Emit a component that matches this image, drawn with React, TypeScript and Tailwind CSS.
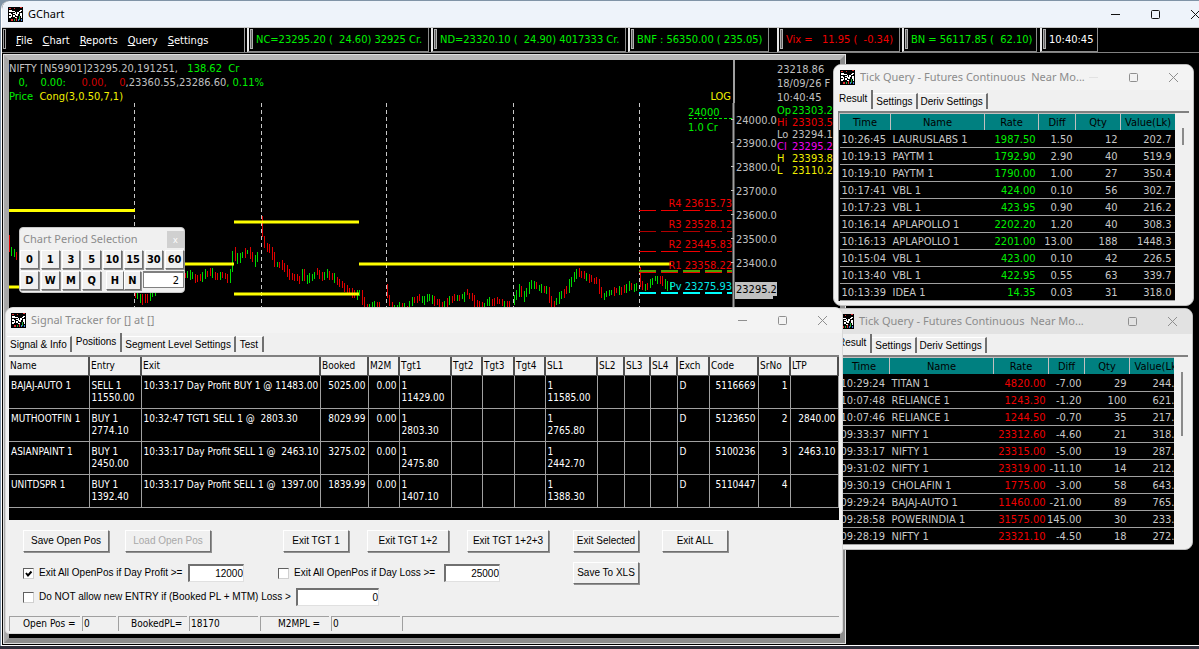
import type { ReactNode } from "react";

const TAHOMA = "font-['DejaVu_Sans_Condensed','DejaVu_Sans',sans-serif]";
const DIALOG = "font-['Liberation_Sans',sans-serif]";
const CAPTION = "font-['Noto_Sans',sans-serif]";

function AppIcon() {
  return (
    <svg className="h-[15px] w-[15px] shrink-0" viewBox="0 0 15 15" shapeRendering="crispEdges" aria-hidden="true">
      <rect width="15" height="15" fill="#000" />
      <path d="M1 1h2v1H1zM6 1h1v1H6zM12 0h2v1h-2z" fill="#e03030" />
      <path d="M1 3h3v2H1zM1 6h2v2H1zM3 7h1v3H3zM1 9h2v2H1zM4 4h3v1H4zM5 6h2v1H5zM5 8h2v2H5zM7 5h1v3H7zM8 7h2v2H8zM9 5h2v2H9zM11 4h2v1h-2zM12 3h2v1h-2zM12 6h2v3h-2zM13 9h1v2h-1zM7 10h2v1H7z" fill="#fff" />
      <path d="M3 12h2v2H3zM8 11h1v3H8z" fill="#e03030" />
      <path d="M6 12h1v2H6zM11 9h1v4h-1z" fill="#20b040" />
      <path d="M10 12h1v2h-1zM13 12h1v2h-1z" fill="#4080e0" />
    </svg>
  );
}

function CaptionButtons({ faintMinimize = false, dark = false }: { faintMinimize?: boolean; dark?: boolean }) {
  const stroke = dark ? "#111" : "#8f8f8f";
  return (
    <div className="flex shrink-0">
      <button aria-label="Minimize" className="flex h-6 w-10 items-center justify-center">
        <svg width="11" height="11" viewBox="0 0 11 11"><path d="M1 5.5h9" stroke={faintMinimize ? "#e2e2e2" : stroke} /></svg>
      </button>
      <button aria-label="Maximize" className="flex h-6 w-10 items-center justify-center">
        <svg width="11" height="11" viewBox="0 0 11 11"><rect x="1.5" y="1.5" width="8" height="8" rx="1" fill="none" stroke={stroke} /></svg>
      </button>
      <button aria-label="Close" className="flex h-6 w-10 items-center justify-center">
        <svg width="11" height="11" viewBox="0 0 11 11"><path d="M1 1l9 9M10 1l-9 9" stroke={stroke} /></svg>
      </button>
    </div>
  );
}

function Band({ width, color, children }: { width: string; color: string; children: ReactNode }) {
  return (
    <div className={`flex h-[24px] shrink-0 overflow-hidden border border-l-2 border-t-0 border-[#8c8c8c] border-l-[#e8e8e8] leading-[24px] whitespace-pre ${width} ${color}`}>
      <span className="mt-px mr-[3px] ml-px h-[20px] w-[3px] shrink-0 border border-[#b0b0b0] bg-[#606060]" />
      {children}
    </div>
  );
}

const MENU = ["File", "Chart", "Reports", "Query", "Settings"];

function Toolbar() {
  return (
    <div className="flex h-[26px] items-start overflow-hidden border-t border-b border-t-[#c8c8c8] border-b-[#808080] bg-black text-[11px]">
      <nav className="flex h-[24px] w-[243px] shrink-0 gap-[10px] border-r border-[#a0a0a0] leading-[25px] text-white">
        <span className="mt-px ml-px h-[20px] w-[3px] shrink-0 border border-[#a0a0a0]" />
        {MENU.map((m) => (
          <a key={m} href={`#${m}`}>
            <u>{m[0]}</u>
            {m.slice(1)}
          </a>
        ))}
      </nav>
      <div className="ml-[2px] flex gap-[2px] text-[#00f000]">
        <Band width="w-[182px]" color="">{"NC=23295.20 (  24.60) 32925 Cr."}</Band>
        <Band width="w-[195px]" color="">{"ND=23320.10 (  24.90) 4017333 Cr."}</Band>
        <Band width="w-[141px]" color="">{"BNF : 56350.00 ( 235.05)"}</Band>
      </div>
      <div className="ml-[8px] flex gap-[2px]">
        <Band width="w-[123px]" color="text-[#f00000]">{"Vix =   11.95 (  -0.34)"}</Band>
        <Band width="w-[135px]" color="text-[#00f000]">{"BN = 56117.85 (  62.10)"}</Band>
      </div>
      <div className="ml-[3px]">
        <Band width="w-[58px]" color="text-white">10:40:45</Band>
      </div>
    </div>
  );
}

/* Price path as x/y anchors, one list for each uninterrupted run of bars. */
const RUNS: number[][][] = [
  [[9, 243], [11, 252], [15, 253], [19, 258]],
  [[135, 294], [138, 296], [143, 300], [148, 298], [152, 293], [158, 288], [170, 280], [186, 274], [193, 276], [198, 279], [205, 275], [210, 272], [215, 276], [221, 275], [226, 277], [229, 280], [231, 272], [234, 252], [237, 260], [240, 257], [246, 253], [250, 253], [255, 262], [259, 256]],
  [[262, 227], [264, 240], [266, 246], [268, 249], [270, 248], [273, 256], [276, 264], [280, 265], [285, 268], [290, 275], [295, 277], [300, 280], [303, 273], [307, 279], [312, 277], [317, 272], [322, 277], [328, 274], [335, 279], [340, 283], [345, 288], [350, 292], [355, 295], [360, 292], [363, 300], [367, 308], [374, 305], [381, 309]],
  [[387, 292], [389, 300], [393, 309], [400, 306], [408, 308], [413, 300], [420, 298], [425, 300], [430, 297], [437, 302], [443, 305], [450, 300], [457, 298], [463, 297], [467, 293], [473, 298], [477, 304], [483, 306], [490, 302], [497, 301], [503, 304], [511, 305]],
  [[514, 301], [518, 293], [520, 289], [524, 297], [530, 287], [533, 283], [540, 288], [547, 290], [550, 299], [553, 305], [560, 297], [567, 291], [572, 280], [578, 273], [583, 275], [590, 278], [597, 281], [600, 290], [603, 297], [608, 294], [615, 291], [622, 290], [630, 286], [638, 289]],
  [[640, 277], [642, 286], [646, 287], [650, 283], [655, 279], [662, 281], [667, 285], [671, 287]],
];

function makeBars() {
  let seed = 17;
  const rnd = () => {
    seed = (seed * 1103515245 + 12345) % 2147483648;
    return seed / 2147483648;
  };
  let up = "";
  let down = "";
  for (const run of RUNS) {
    let i = 0;
    const end = run[run.length - 1][0];
    for (let x = run[0][0]; x < end; x += 2.5) {
      while (run[i + 1][0] <= x) i++;
      const [x0, y0] = run[i];
      const [x1, y1] = run[i + 1];
      const slope = (y1 - y0) / (x1 - x0);
      const mid = y0 + slope * (x - x0) + (rnd() - 0.5) * 2;
      const half = 2 + rnd() * 2.5 + Math.min(Math.abs(slope) * 1.2, 8);
      const bar = `M${Math.floor(x) + 0.5} ${Math.round(mid - half)}v${Math.round(half * 2)}`;
      if (rnd() + slope * 0.35 > 0.5) down += bar;
      else up += bar;
    }
  }
  return { up, down };
}

const BARS = makeBars();
const SESSIONS = [134, 261, 386, 513, 639];
const AXIS: [string, number][] = [["24000.0", 120], ["23900.0", 143], ["23800.0", 167], ["23700.0", 191], ["23600.0", 215], ["23500.0", 239], ["23400.0", 263]];
const PIVOTS: [string, number, string][] = [["R4 23615.73", 210, "#f00000"], ["R3 23528.12", 231, "#b00000"], ["R2 23445.83", 251, "#f00000"], ["R1 23358.22", 272, "#f00000"]];
const QUOTE: [string, string, string][] = [["Op", "23303.2", "text-[#00f000]"], ["Hi", "23303.5", "text-[#f00000]"], ["Lo", "23294.1", "text-[#c0c0c0]"], ["Cl", "23295.2", "text-[#f000f0]"], ["H", "23393.8", "text-[#f0f000]"], ["L", "23110.2", "text-[#f0f000]"]];

function Chart() {
  return (
    <svg className="block h-[204px] w-[768px]" viewBox="9 103 768 204" fontSize="11">
      <g stroke="#c8c8c8" strokeDasharray="4 3">
        {SESSIONS.map((x) => <path key={x} d={`M${x + 0.5} 103V307`} />)}
      </g>
      <g fill="none" shapeRendering="crispEdges">
        <path d={BARS.up} stroke="#00d800" />
        <path d={BARS.down} stroke="#e00000" />
      </g>
      <path d="M9 210.5H135M9 287H20M180 264H234M234 222H359M234 294H359M359 264H671" stroke="#ffff00" strokeWidth="3" />
      <g shapeRendering="crispEdges">
        {PIVOTS.map(([label, y, color]) => <path key={label} d={`M639 ${y + 0.5}H732`} stroke={color} strokeDasharray="17 5" />)}
        <path d="M639 271H732" stroke="#50a000" strokeWidth="2" strokeDasharray="17 5" />
        <path d="M639 293H732" stroke="#00ffff" strokeWidth="2" strokeDasharray="17 5" />
      </g>
      {PIVOTS.map(([label, y]) => <text key={label} x="732" y={y - 3} fill="#f00000" textAnchor="end">{label}</text>)}
      <text x="732" y="290" fill="#00e8e8" textAnchor="end">Pv 23275.93</text>
      <g fill="#00f000">
        <text x="688" y="116">24000</text>
        <text x="688" y="131">1.0 Cr</text>
      </g>
      <path d="M689 118.5H733" stroke="#00f000" strokeDasharray="3 2" />
      <path d="M733.5 103V307" stroke="#a0a0a0" strokeWidth="2" />
      {AXIS.map(([label, y]) => (
        <g key={label}>
          <path d={`M731 ${y - 0.5}h3`} stroke="#c0c0c0" />
          <text x="736" y={y + 4} fill="#c0c0c0">{label}</text>
        </g>
      ))}
      <path d="M735 282h42v14h-4v3h-38z" fill="#c0c0c0" />
      <text x="736" y="293" fill="#000">23295.2</text>
    </svg>
  );
}

function ChartWindow() {
  return (
    <section className="absolute top-[2px] left-[2px] h-[588px] w-[841px] border-[5px] border-[#a8a8a8] border-t-[#b8b8b8] border-r-[#8c8c8c] border-b-[#8c8c8c] bg-black text-[11px] leading-[14px] outline outline-[#e0e0e0]">
      <div className="flex">
        <div className="w-[768px] shrink-0">
          <div className="h-[43px] w-[726px] border-r-2 border-[#a0a0a0] pt-[2px] whitespace-pre text-[#c0c0c0]">
            <div>NIFTY [N59901]23295.20,191251,{"   "}<span className="text-[#00f000]">138.62{"  "}Cr</span></div>
            <div>
              <span className="text-[#00f000]">{"   0,    0.00:    "}</span>
              <span className="text-[#d00000]">{" 0.00,    0"}</span>
              ,23360.55,23286.60
              <span className="text-[#00f000]">, 0.11%</span>
            </div>
            <div className="flex h-[12px] justify-between text-[#f0f000]">
              <span><span className="text-[#00f000]">Price</span>{"  "}Cong(3,0.50,7,1)</span>
              <span className="pr-[2px]">LOG</span>
            </div>
          </div>
          <Chart />
        </div>
        <div className="min-w-0 flex-1 overflow-hidden pt-[3px] whitespace-pre text-[#c0c0c0]">
          <div>23218.86</div>
          <div>18/09/26 F</div>
          <div>10:40:45</div>
          {QUOTE.map(([k, v, c]) => (
            <div key={k} className={`flex leading-[12px] ${c}`}><span className="w-[15px] shrink-0">{k}</span>{v}</div>
          ))}
        </div>
      </div>
    </section>
  );
}

function Tabs({ items, active }: { items: string[]; active: number }) {
  return (
    <div role="tablist" className={`flex h-[19px] items-end pl-px text-[10px] leading-[12px] text-black ${DIALOG}`}>
      {items.map((t, i) => (
        <button key={t} role="tab" aria-selected={i === active} className={i === active ? "h-[19px] border-r-2 border-[#707070] px-[4px] pb-px whitespace-nowrap" : "h-[16px] min-w-[28px] border-t border-r-2 border-t-white border-r-[#707070] px-[3px] whitespace-nowrap"}>
          {t}
        </button>
      ))}
    </div>
  );
}

interface TickProps {
  place: string;
  table: string;
  cols: string[];
  rows: string[];
  rateColor: string;
  valuePad: string;
  thumb: string;
  bar: string;
}

function TickWindow({ place, table, cols, rows, rateColor, valuePad, thumb, bar }: TickProps) {
  return (
    <section className={`absolute overflow-hidden rounded-lg border border-[#bdbdbd] bg-[#f0f0f0] ${place}`}>
      <header className={`flex h-[25px] items-center pl-[6px] text-[11px] text-[#8c8c8c] ${bar} ${CAPTION}`}>
        <AppIcon />
        <h2 className="ml-[5px] min-w-0 flex-1 whitespace-pre">{"Tick Query - Futures Continuous  Near Mo..."}</h2>
        <CaptionButtons faintMinimize />
      </header>
      <Tabs items={["Result", "Settings", "Deriv Settings"]} active={0} />
      <div className="mx-[4px] mt-[2px] mb-[4px] flex border-t-2 border-l border-[#808080]">
        <div className="w-[336px] shrink-0 overflow-hidden bg-black">
          <table className={`table-fixed border-collapse text-[11px] leading-[15px] text-[#c8c8c8] ${table}`}>
            <colgroup>{cols.map((c, i) => <col key={i} className={c} />)}</colgroup>
            <thead>
              <tr className="h-[17px] bg-[#008080] text-black">
                {["Time", "Name", "Rate", "Diff", "Qty", "Value(Lk)"].map((h) => (
                  <th key={h} className="border border-[#c0c0c0] border-b-black p-0 text-center font-normal">{h}</th>
                ))}
              </tr>
            </thead>
            <tbody>
              {rows.map((r) => {
                const c = r.split("|");
                return (
                  <tr key={r} className="h-[17px] border-b border-[#a0a0a0] whitespace-nowrap">
                    <td className="p-0 pl-[2px]">{c[0]}</td>
                    <td className="p-0 pl-[2px]">{c[1]}</td>
                    <td className={`p-0 pr-[3px] text-right ${rateColor}`}>{c[2]}</td>
                    <td className="p-0 pr-[3px] text-right"><span className="float-right">{c[3]}</span></td>
                    <td className="p-0 pr-[3px] text-right">{c[4]}</td>
                    <td className={`p-0 text-right ${valuePad}`}>{c[5]}</td>
                  </tr>
                );
              })}
            </tbody>
          </table>
        </div>
        <div className="flex-1 pl-[7px]">
          <div className={`w-[2px] bg-[#8a8a8a] ${thumb}`} />
        </div>
      </div>
    </section>
  );
}

const BUYS = [
  "10:26:45|LAURUSLABS 1|1987.50|1.50|12|202.7",
  "10:19:13|PAYTM 1|1792.90|2.90|40|519.9",
  "10:19:10|PAYTM 1|1790.00|1.00|27|350.4",
  "10:17:41|VBL 1|424.00|0.10|56|302.7",
  "10:17:23|VBL 1|423.95|0.90|40|216.2",
  "10:16:14|APLAPOLLO 1|2202.20|1.20|40|308.3",
  "10:16:13|APLAPOLLO 1|2201.00|13.00|188|1448.3",
  "10:15:04|VBL 1|423.00|0.10|42|226.5",
  "10:13:40|VBL 1|422.95|0.55|63|339.7",
  "10:13:39|IDEA 1|14.35|0.03|31|318.0",
];

const SELLS = [
  "10:29:24|TITAN 1|4820.00|-7.00|29|244.",
  "10:07:48|RELIANCE 1|1243.30|-1.20|100|621.",
  "10:07:46|RELIANCE 1|1244.50|-0.70|35|217.",
  "09:33:37|NIFTY 1|23312.60|-4.60|21|318.",
  "09:33:17|NIFTY 1|23315.00|-5.00|19|287.",
  "09:31:02|NIFTY 1|23319.00|-11.10|14|212.",
  "09:30:19|CHOLAFIN 1|1775.00|-3.00|58|643.",
  "09:29:24|BAJAJ-AUTO 1|11460.00|-21.00|89|765.",
  "09:28:58|POWERINDIA 1|31575.00|145.00|30|233.",
  "09:28:19|NIFTY 1|23321.10|-4.50|18|272.",
];

const RAISED = "border border-t-white border-l-white border-r-[#707070] border-b-[#707070] shadow-[1px_1px_0_#909090]";

function PeriodKey({ label, width = "w-[19px]" }: { label: string; width?: string }) {
  return <button className={`h-[19px] bg-[#f0f0f0] text-center text-[11px] leading-[16px] font-bold ${RAISED} ${width}`}>{label}</button>;
}

function PeriodPalette() {
  return (
    <section className="absolute top-[174px] left-[17px] w-[166px] rounded border border-[#c8c8c8] bg-[#f0f0f0] text-black">
      <header className={`flex h-[22px] items-center justify-between pl-[3px] text-[11px] text-[#8c8c8c] ${CAPTION}`}>
        <h2>Chart Period Selection</h2>
        <button aria-label="Close palette" className="h-[17px] w-[17px] bg-[#d0d0d0] text-[9px] leading-[15px] text-white">x</button>
      </header>
      <div className="flex gap-[2px] pb-[2px]">
        {["0", "1", "3", "5", "10", "15", "30", "60"].map((k) => <PeriodKey key={k} label={k} />)}
      </div>
      <div className="flex gap-[2px] pb-[2px]">
        {["D", "W", "M", "Q"].map((k) => <PeriodKey key={k} label={k} />)}
        <div className="ml-[3px] flex">
          <PeriodKey label="H" width="w-[18px]" />
          <PeriodKey label="N" width="w-[17px]" />
        </div>
        <input aria-label="Period" defaultValue="2" className="h-[17px] w-[41px] border border-t-2 border-[#808080] bg-white pr-[4px] text-right text-[11px] leading-[14px]" />
      </div>
    </section>
  );
}

const POSITION_COLS: [string, string][] = [
  ["Name", "w-[80px]"], ["Entry", "w-[52px]"], ["Exit", "w-[179px]"], ["Booked", "w-[48px]"], ["M2M", "w-[31px]"], ["Tgt1", "w-[52px]"],
  ["Tgt2", "w-[31px]"], ["Tgt3", "w-[32px]"], ["Tgt4", "w-[31px]"], ["SL1", "w-[52px]"], ["SL2", "w-[27px]"], ["SL3", "w-[26px]"],
  ["SL4", "w-[27px]"], ["Exch", "w-[32px]"], ["Code", "w-[49px]"], ["SrNo", "w-[32px]"], ["LTP", "w-[48px]"],
];
const RIGHT = new Set(["Booked", "M2M", "Code", "SrNo", "LTP"]);

const POSITIONS = [
  ["BAJAJ-AUTO 1", "SELL 1\n11550.00", "10:33:17 Day Profit BUY 1 @ 11483.00", "5025.00", "0.00", "1\n11429.00", "", "", "", "1\n11585.00", "", "", "", "D", "5116669", "1", ""],
  ["MUTHOOTFIN 1", "BUY 1\n2774.10", "10:32:47 TGT1 SELL 1 @  2803.30", "8029.99", "0.00", "1\n2803.30", "", "", "", "1\n2765.80", "", "", "", "D", "5123650", "2", "2840.00"],
  ["ASIANPAINT 1", "BUY 1\n2450.00", "10:33:17 Day Profit SELL 1 @  2463.10", "3275.02", "0.00", "1\n2475.80", "", "", "", "1\n2442.70", "", "", "", "D", "5100236", "3", "2463.10"],
  ["UNITDSPR 1", "BUY 1\n1392.40", "10:33:17 Day Profit SELL 1 @  1397.00", "1839.99", "0.00", "1\n1407.10", "", "", "", "1\n1388.30", "", "", "", "D", "5110447", "4", ""],
];

function PushButton({ label, place, disabled = false }: { label: string; place: string; disabled?: boolean }) {
  return (
    <button disabled={disabled} className={`h-[22px] shrink-0 bg-[#f0f0f0] text-center whitespace-nowrap disabled:text-[#a8a8a8] ${RAISED} ${place}`}>{label}</button>
  );
}

const FIELD = "h-[18px] shrink-0 border border-t-2 border-l-2 border-t-[#707070] border-l-[#707070] border-r-[#e0e0e0] border-b-[#e0e0e0] bg-white pb-px text-right text-[10px]";
const CHECK = "h-[11px] w-[11px] shrink-0 appearance-none border border-t-[#606060] border-l-[#606060] border-r-[#d0d0d0] border-b-[#d0d0d0] bg-white";

function StatusCell({ children, place }: { children?: ReactNode; place: string }) {
  return <div className={`h-[15px] shrink-0 border-t border-l border-[#a0a0a0] whitespace-pre ${place}`}>{children}</div>;
}

function SignalTracker() {
  return (
    <section className="absolute top-[254px] left-[3px] w-[838px] overflow-hidden rounded-t-lg rounded-b border border-[#d8d8d8] bg-[#f0f0f0] text-black">
      <header className={`flex h-[25px] items-center bg-[#f3f3f3] pl-[5px] text-[11px] text-[#8c8c8c] ${CAPTION}`}>
        <AppIcon />
        <h2 className="ml-[5px] flex-1">Signal Tracker for [] at []</h2>
        <CaptionButtons />
      </header>
      <Tabs items={["Signal & Info", "Positions", "Segment Level Settings", "Test"]} active={1} />
      <div className="mx-[3px] mt-[3px] h-[165px] border-t-2 border-[#808080] bg-black">
        <table className="w-full table-fixed border-collapse text-[10px] leading-[12px] text-white">
          <colgroup>{POSITION_COLS.map(([n, w]) => <col key={n} className={w} />)}</colgroup>
          <thead>
            <tr className="h-[18px] bg-[#f0f0f0] text-black">
              {POSITION_COLS.map(([n]) => (
                <th key={n} className="border-r-2 border-b border-[#505050] p-0 pl-px text-left font-normal">{n}</th>
              ))}
            </tr>
          </thead>
          <tbody>
            {POSITIONS.map((row) => (
              <tr key={row[0]} className="h-[33px] border-b border-[#a0a0a0]">
                {row.map((cell, i) => (
                  <td key={i} className={`border-r border-[#a0a0a0] p-0 pt-[4px] align-top whitespace-pre ${RIGHT.has(POSITION_COLS[i][0]) ? "pr-[2px] text-right" : "pl-[2px]"}`}>{cell}</td>
                ))}
              </tr>
            ))}
          </tbody>
        </table>
      </div>
      <div className={`flex flex-col text-[10px] leading-[14px] ${DIALOG}`}>
        <div className="mt-[10px] flex pl-[17px]">
          <PushButton label="Save Open Pos" place="w-[86px]" />
          <PushButton label="Load Open Pos" place="ml-[16px] w-[86px]" disabled />
          <PushButton label="Exit TGT 1" place="ml-[72px] w-[66px]" />
          <PushButton label="Exit TGT 1+2" place="ml-[18px] w-[82px]" />
          <PushButton label="Exit TGT 1+2+3" place="ml-[18px] w-[82px]" />
          <PushButton label="Exit Selected" place="ml-[24px] w-[66px]" />
          <PushButton label="Exit ALL" place="ml-[23px] w-[66px]" />
        </div>
        <div className="mt-[10px] flex items-center pl-[17px]">
          <label className="flex w-[165px] shrink-0 items-center gap-[5px] whitespace-nowrap">
            <span className="grid">
              <input type="checkbox" defaultChecked className={`col-start-1 row-start-1 ${CHECK}`} />
              <svg className="pointer-events-none col-start-1 row-start-1 h-[11px] w-[11px]" viewBox="0 0 11 11" aria-hidden="true"><path d="M3 5l2 2.5L8.500 3.500" fill="none" stroke="#000" strokeWidth="2" /></svg>
            </span>
            Exit All OpenPos if Day Profit &gt;=
          </label>
          <input aria-label="Day profit limit" defaultValue="12000" className={`w-[56px] ${FIELD}`} />
          <label className="ml-[34px] flex w-[166px] shrink-0 items-center gap-[5px] whitespace-nowrap">
            <input type="checkbox" className={CHECK} />
            Exit All OpenPos if Day Loss &gt;=
          </label>
          <input aria-label="Day loss limit" defaultValue="25000" className={`w-[56px] ${FIELD}`} />
          <PushButton label="Save To XLS" place="ml-[73px] w-[66px]" />
        </div>
        <div className="mt-[4px] flex items-center pl-[17px]">
          <label className="flex w-[273px] shrink-0 items-center gap-[5px] whitespace-nowrap">
            <input type="checkbox" className={CHECK} />
            Do NOT allow new ENTRY if (Booked PL + MTM) Loss &gt;
          </label>
          <input aria-label="Booked loss limit" defaultValue="0" className={`w-[83px] ${FIELD}`} />
        </div>
      </div>
      <footer className={`mx-[3px] mt-[10px] mb-[2px] flex gap-[2px] text-[10px] leading-[14px] ${TAHOMA}`}>
        <StatusCell place="w-[71px] pl-[13px]">Open Pos =</StatusCell>
        <StatusCell place="w-[34px] pl-px">0</StatusCell>
        <StatusCell place="w-[69px] pl-[12px]">BookedPL=</StatusCell>
        <StatusCell place="w-[69px] pl-px">18170</StatusCell>
        <StatusCell place="w-[69px] pl-[17px]">M2MPL =</StatusCell>
        <StatusCell place="w-[69px] pl-px">0</StatusCell>
        <StatusCell place="min-w-0 flex-1" />
      </footer>
    </section>
  );
}

export default function App() {
  return (
    <div className={`flex min-h-screen w-full flex-col overflow-hidden bg-[#8093a6] pt-px ${TAHOMA}`}>
      <div className="ml-px flex flex-1 flex-col overflow-hidden rounded-tl-lg border-b border-l border-white bg-black">
        <header className={`flex h-[26px] items-center bg-[#eef3fa] pl-[6px] text-[11px] text-black ${CAPTION}`}>
          <AppIcon />
          <h1 className="ml-[5px] flex-1">GChart</h1>
          <div className="-mr-[16px]"><CaptionButtons dark /></div>
        </header>
        <Toolbar />
        <main className="relative flex-1">
          <ChartWindow />
          <PeriodPalette />
          <TickWindow
            place="top-[255px] left-[830px] w-[361px]"
            table="w-[347px]"
            cols={["w-[51px]", "w-[104px]", "w-[55px]", "w-[36px]", "w-[45px]", "w-[56px]"]}
            rows={SELLS}
            rateColor="text-[#f00000]"
            valuePad="pr-[11px]"
            thumb="mt-[15px] h-[64px]"
            bar="bg-[#e2e2e2]"
          />
          <SignalTracker />
          <TickWindow
            place="top-[11px] left-[831px] w-[361px]"
            table="w-[336px]"
            cols={["w-[51px]", "w-[94px]", "w-[54px]", "w-[37px]", "w-[45px]", "w-[55px]"]}
            rows={BUYS}
            rateColor="text-[#00f000]"
            valuePad="pr-[4px]"
            thumb="mt-[15px] h-[17px]"
            bar="bg-[#f3f3f3]"
          />
        </main>
      </div>
      <div className="h-[3px] bg-[#30303c]" />
    </div>
  );
}
